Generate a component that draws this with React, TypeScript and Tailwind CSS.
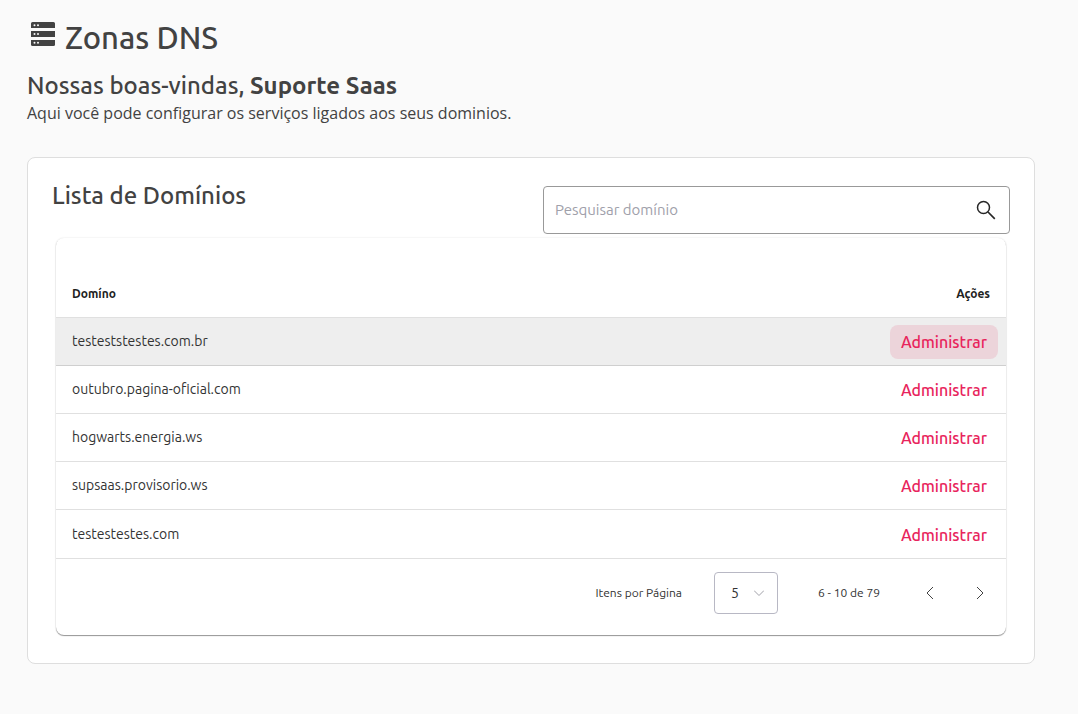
import { useState } from "react";

interface Domain {
  id: number;
  name: string;
}

const domains: Domain[] = [
  { id: 1, name: "testeststestes.com.br" },
  { id: 2, name: "outubro.pagina-oficial.com" },
  { id: 3, name: "hogwarts.energia.ws" },
  { id: 4, name: "supsaas.provisorio.ws" },
  { id: 5, name: "testestestes.com" },
];

function ServerIcon() {
  return (
    <svg width="24" height="24" viewBox="0 0 24 24" fill="#424242" aria-hidden="true">
      <path d="M1.5 0h21A1.5 1.5 0 0 1 24 1.5V6H0V1.5A1.5 1.5 0 0 1 1.5 0z" />
      <path d="M0 9h24v6H0z" />
      <path d="M0 18h24v4.5a1.5 1.5 0 0 1-1.5 1.5h-21A1.5 1.5 0 0 1 0 22.5z" />
      <g fill="#fafafa">
        <circle cx="3.5" cy="3.3" r="1" />
        <circle cx="7" cy="3.3" r="1" />
        <circle cx="3.5" cy="12" r="1" />
        <circle cx="7" cy="12" r="1" />
        <circle cx="3.5" cy="20.7" r="1" />
        <circle cx="7" cy="20.7" r="1" />
      </g>
    </svg>
  );
}

function SearchIcon() {
  return (
    <svg width="20" height="20" viewBox="0 0 20 20" fill="none" stroke="#262626" aria-hidden="true">
      <circle cx="7.5" cy="7.5" r="6" strokeWidth="1.5" />
      <path d="M12 12l6.8 6.8" strokeWidth="1.7" />
    </svg>
  );
}

export default function App() {
  const [search, setSearch] = useState("");
  const [perPage, setPerPage] = useState("5");

  const filtered = domains.filter((d) => d.name.includes(search.trim()));

  return (
    <div className="min-h-screen bg-[#fafafa] pt-4 pr-[43px] pb-12 pl-[27px] font-['Ubuntu','Noto_Sans',sans-serif] text-[#424242]">
      <header>
        <h1 className="flex items-center gap-2.5 pl-1 text-[31px] leading-11 font-medium">
          <span className="pb-2">
            <ServerIcon />
          </span>
          Zonas DNS
        </h1>
        <h2 className="mt-2.5 text-2xl leading-8 font-medium">
          Nossas boas-vindas, <strong className="font-bold">Suporte Saas</strong>
        </h2>
        <p className="font-['Open_Sans',sans-serif] text-base leading-[22px]">
          Aqui você pode configurar os serviços ligados aos seus dominios.
        </p>
      </header>

      <main className="mt-[33px] rounded-lg border border-[#dedede] bg-white px-6 pt-5 pb-7">
        <div className="grid grid-cols-2 items-start gap-6">
          <h2 className="text-2xl leading-9 font-medium">Lista de Domínios</h2>
          <div className="mt-2 flex h-12 items-center rounded border border-[#999999] pr-[13px] pl-[11px]">
            <input
              type="text"
              aria-label="Pesquisar domínio"
              placeholder="Pesquisar domínio"
              value={search}
              onChange={(e) => setSearch(e.target.value)}
              className="min-w-0 flex-1 text-[15px] outline-none placeholder:text-[#a0a0aa]"
            />
            <button type="button" aria-label="Pesquisar">
              <SearchIcon />
            </button>
          </div>
        </div>

        <section className="mx-1 mt-1 rounded-lg pt-[31px] pb-2 shadow-[0_1px_1px_rgba(0,0,0,0.4),0_0_2px_rgba(0,0,0,0.12)]">
          <table className="w-full border-collapse">
            <thead>
              <tr className="h-12 border-b border-[#e0e0e0] text-xs text-[#212121]">
                <th className="px-4 pt-0.5 text-left font-bold">Domíno</th>
                <th className="px-4 pt-0.5 text-right font-bold">Ações</th>
              </tr>
            </thead>
            <tbody>
              {filtered.map((d) => (
                <tr
                  key={d.id}
                  className="group h-12 border-b border-[#e0e0e0] first:border-[#cfcfcf] first:bg-[#eeeeee] last:h-[49px]"
                >
                  <td className="px-4 text-sm text-[#333333]">{d.name}</td>
                  <td className="px-2 pt-0.5 text-right">
                    <button
                      type="button"
                      className="h-[34px] w-[108px] rounded-lg text-base font-medium text-[#e8245c] group-first:bg-[#ecd4da]"
                    >
                      Administrar
                    </button>
                  </td>
                </tr>
              ))}
            </tbody>
          </table>

          <div className="flex h-[68px] items-center justify-end pr-[21px] text-xs text-[#333333]">
            <label htmlFor="per-page">Itens por Página</label>
            <div className="relative ml-8">
              <select
                id="per-page"
                value={perPage}
                onChange={(e) => setPerPage(e.target.value)}
                className="h-[42px] w-16 appearance-none rounded border border-[#b8b8c4] bg-white pl-4 text-sm outline-none"
              >
                <option>5</option>
                <option>10</option>
                <option>20</option>
              </select>
              <svg
                className="pointer-events-none absolute top-4 right-3.5"
                width="10"
                height="10"
                viewBox="0 0 10 10"
                fill="none"
                stroke="#a0a0a8"
                aria-hidden="true"
              >
                <path d="M0 2.5l5 5 5-5" />
              </svg>
            </div>
            <span className="ml-10 whitespace-nowrap">6 - 10 de 79</span>
            <div className="ml-[45px] flex gap-10">
              <button type="button" aria-label="Página anterior">
                <svg width="10" height="14" viewBox="0 0 10 14" fill="none" stroke="#424242">
                  <path d="M8 1L2 7l6 6" />
                </svg>
              </button>
              <button type="button" aria-label="Próxima página">
                <svg width="10" height="14" viewBox="0 0 10 14" fill="none" stroke="#424242">
                  <path d="M2 1l6 6-6 6" />
                </svg>
              </button>
            </div>
          </div>
        </section>
      </main>
    </div>
  );
}
